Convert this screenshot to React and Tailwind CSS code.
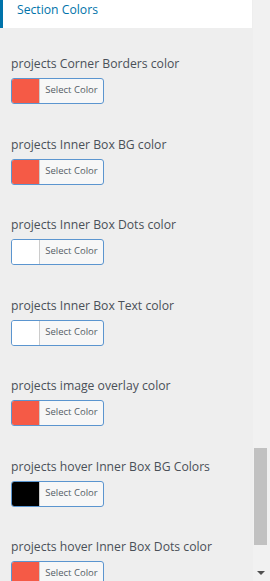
const fields = [
    { label: 'projects Corner Borders color', color: '#f55a46' },
    { label: 'projects Inner Box BG color', color: '#f55a46' },
    { label: 'projects Inner Box Dots color', color: '#ffffff' },
    { label: 'projects Inner Box Text color', color: '#ffffff' },
    { label: 'projects image overlay color', color: '#f55a46' },
    { label: 'projects hover Inner Box BG Colors', color: '#000000' },
    { label: 'projects hover Inner Box Dots color', color: '#f55a46' },
];

function ColorButton({ color }) {
    return (
        <button
            type="button"
            className="flex h-[26px] w-[93px] items-stretch overflow-hidden rounded-[3px] border border-[#5b95cf] bg-[#f7f7f7] p-0"
        >
            <span className="w-[28px] border-r border-[#cccccc]" style={{ backgroundColor: color }} />
            <span className="flex flex-1 items-center justify-center pb-[1px] text-[9.5px] text-[#555d66]">
                Select Color
            </span>
        </button>
    );
}

export default function App() {
    return (
        <div
            className="flex h-[581px] w-[270px] overflow-hidden bg-[#eeeeee]"
            style={{ fontFamily: '"Open Sans", "Noto Sans", sans-serif' }}
        >
            {/* Panel */}
            <div className="flex-1 overflow-hidden">
                {/* Section header */}
                <div className="flex h-[28px] w-[252px] items-start border-l-[3px] border-[#0073aa] bg-white pl-[14px] pt-[1px]">
                    <h3 className="text-[12.2px] font-medium leading-[18px] text-[#0073aa]">Section Colors</h3>
                </div>

                {/* Color fields */}
                <div className="flex flex-col gap-[31.5px] pl-[11px] pt-[27px]">
                    {fields.map((field) => (
                        <div key={field.label} className="flex flex-col gap-[5px]">
                            <label className="whitespace-nowrap text-[12.2px] font-medium leading-[18px] text-[#4a5058]">
                                {field.label}
                            </label>
                            <ColorButton color={field.color} />
                        </div>
                    ))}
                </div>
            </div>

            {/* Scrollbar */}
            <div className="relative w-[17px] shrink-0 bg-[#f1f1f1]">
                <div className="absolute left-[1px] top-[448px] h-[97px] w-[13px] bg-[#c1c1c1]" />
                <div className="absolute bottom-[6px] left-[4px] h-0 w-0 border-x-[4px] border-t-[4px] border-x-transparent border-t-[#505050]" />
            </div>
        </div>
    );
}
